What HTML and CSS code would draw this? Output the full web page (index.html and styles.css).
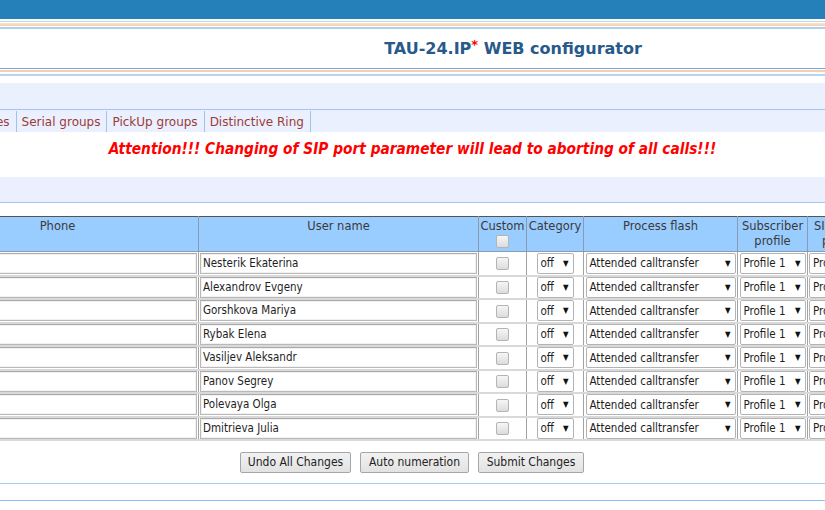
FILE: index.html
```html
<!DOCTYPE html>
<html>
<head>
<meta charset="utf-8">
<title>TAU-24.IP WEB configurator</title>
<link rel="stylesheet" href="styles.css">
</head>
<body>
<div class="topbar"></div>
<div class="stripes-top">
  <div class="ln lb1"></div>
  <div class="ln peach"></div>
  <div class="ln lb2"></div>
</div>
<div class="titlerow">
  <div class="title">TAU-24.IP<sup class="ast">*</sup> WEB configurator</div>
</div>
<div class="stripes-bot">
  <div class="ln dk"></div>
  <div class="ln peach2"></div>
  <div class="ln lb3"></div>
</div>
<div class="band band1"></div>
<div class="tabs">
  <span class="tab first">Profiles</span><span class="tab">Serial groups</span><span class="tab">PickUp groups</span><span class="tab">Distinctive Ring</span>
</div>
<div class="warn">Attention!!! Changing of SIP port parameter will lead to aborting of all calls!!!</div>
<div class="band band3"></div>
<div class="tablewrap">
<table class="grid">
  <colgroup>
    <col class="c-phone"><col class="c-user"><col class="c-custom"><col class="c-cat"><col class="c-flash"><col class="c-prof"><col class="c-sip">
  </colgroup>
  <thead>
    <tr>
      <th>Phone</th>
      <th>User name</th>
      <th class="th-custom">Custom<br><span class="cb hcb"></span></th>
      <th>Category</th>
      <th>Process flash</th>
      <th>Subscriber<br>profile</th>
      <th class="th-sip"><span>SIP</span><br><span class="l2">profile</span></th>
    </tr>
  </thead>
  <tbody>
    <tr><td class="tin"><div class="inp"></div></td><td class="tin"><div class="inp">Nesterik Ekaterina</div></td><td class="tc"><span class="cb"></span></td><td class="tc"><div class="sel s-cat"><span>off</span><span class="arr">▼</span></div></td><td class="tc"><div class="sel s-flash"><span>Attended calltransfer</span><span class="arr">▼</span></div></td><td class="tc"><div class="sel s-prof"><span>Profile 1</span><span class="arr">▼</span></div></td><td class="tl"><div class="sel s-sip"><span>Profile 1</span><span class="arr">▼</span></div></td></tr>
    <tr><td class="tin"><div class="inp"></div></td><td class="tin"><div class="inp">Alexandrov Evgeny</div></td><td class="tc"><span class="cb"></span></td><td class="tc"><div class="sel s-cat"><span>off</span><span class="arr">▼</span></div></td><td class="tc"><div class="sel s-flash"><span>Attended calltransfer</span><span class="arr">▼</span></div></td><td class="tc"><div class="sel s-prof"><span>Profile 1</span><span class="arr">▼</span></div></td><td class="tl"><div class="sel s-sip"><span>Profile 1</span><span class="arr">▼</span></div></td></tr>
    <tr><td class="tin"><div class="inp"></div></td><td class="tin"><div class="inp">Gorshkova Mariya</div></td><td class="tc"><span class="cb"></span></td><td class="tc"><div class="sel s-cat"><span>off</span><span class="arr">▼</span></div></td><td class="tc"><div class="sel s-flash"><span>Attended calltransfer</span><span class="arr">▼</span></div></td><td class="tc"><div class="sel s-prof"><span>Profile 1</span><span class="arr">▼</span></div></td><td class="tl"><div class="sel s-sip"><span>Profile 1</span><span class="arr">▼</span></div></td></tr>
    <tr><td class="tin"><div class="inp"></div></td><td class="tin"><div class="inp">Rybak Elena</div></td><td class="tc"><span class="cb"></span></td><td class="tc"><div class="sel s-cat"><span>off</span><span class="arr">▼</span></div></td><td class="tc"><div class="sel s-flash"><span>Attended calltransfer</span><span class="arr">▼</span></div></td><td class="tc"><div class="sel s-prof"><span>Profile 1</span><span class="arr">▼</span></div></td><td class="tl"><div class="sel s-sip"><span>Profile 1</span><span class="arr">▼</span></div></td></tr>
    <tr><td class="tin"><div class="inp"></div></td><td class="tin"><div class="inp">Vasiljev Aleksandr</div></td><td class="tc"><span class="cb"></span></td><td class="tc"><div class="sel s-cat"><span>off</span><span class="arr">▼</span></div></td><td class="tc"><div class="sel s-flash"><span>Attended calltransfer</span><span class="arr">▼</span></div></td><td class="tc"><div class="sel s-prof"><span>Profile 1</span><span class="arr">▼</span></div></td><td class="tl"><div class="sel s-sip"><span>Profile 1</span><span class="arr">▼</span></div></td></tr>
    <tr><td class="tin"><div class="inp"></div></td><td class="tin"><div class="inp">Panov Segrey</div></td><td class="tc"><span class="cb"></span></td><td class="tc"><div class="sel s-cat"><span>off</span><span class="arr">▼</span></div></td><td class="tc"><div class="sel s-flash"><span>Attended calltransfer</span><span class="arr">▼</span></div></td><td class="tc"><div class="sel s-prof"><span>Profile 1</span><span class="arr">▼</span></div></td><td class="tl"><div class="sel s-sip"><span>Profile 1</span><span class="arr">▼</span></div></td></tr>
    <tr><td class="tin"><div class="inp"></div></td><td class="tin"><div class="inp">Polevaya Olga</div></td><td class="tc"><span class="cb"></span></td><td class="tc"><div class="sel s-cat"><span>off</span><span class="arr">▼</span></div></td><td class="tc"><div class="sel s-flash"><span>Attended calltransfer</span><span class="arr">▼</span></div></td><td class="tc"><div class="sel s-prof"><span>Profile 1</span><span class="arr">▼</span></div></td><td class="tl"><div class="sel s-sip"><span>Profile 1</span><span class="arr">▼</span></div></td></tr>
    <tr><td class="tin"><div class="inp"></div></td><td class="tin"><div class="inp">Dmitrieva Julia</div></td><td class="tc"><span class="cb"></span></td><td class="tc"><div class="sel s-cat"><span>off</span><span class="arr">▼</span></div></td><td class="tc"><div class="sel s-flash"><span>Attended calltransfer</span><span class="arr">▼</span></div></td><td class="tc"><div class="sel s-prof"><span>Profile 1</span><span class="arr">▼</span></div></td><td class="tl"><div class="sel s-sip"><span>Profile 1</span><span class="arr">▼</span></div></td></tr>
  </tbody>
</table>
</div>
<div class="buttons">
  <button class="btn b1">Undo All Changes</button>
  <button class="btn b2">Auto numeration</button>
  <button class="btn b3">Submit Changes</button>
</div>
<div class="footer"></div>
</body>
</html>
```
FILE: styles.css
```css
html, body {
  margin: 0;
  padding: 0;
  background: #fff;
  overflow: hidden;
}
body {
  width: 825px;
  font-family: "DejaVu Sans", Verdana, sans-serif;
  font-size: 12px;
  color: #333;
}
.topbar {
  height: 19px;
  background: #2580ba;
}
.stripes-top {
  padding-top: 2px;
}
.ln { height: 1px; }
.lb1 { background: #bcd9ef; margin-bottom: 1px; }
.peach { height: 3px; background: linear-gradient(#fce6d4, #f7cba6); margin-bottom: 1px; }
.lb2 { height: 2px; background: #aed0ec; }
.titlerow {
  height: 39px;
  display: flex;
  align-items: center;
  justify-content: center;
  padding-left: 201px;
}
.title {
  font-family: "DejaVu Sans", sans-serif;
  font-weight: bold;
  font-size: 16px;
  color: #275a8a;
}
.ast {
  color: #f00;
  font-size: 13px;
  vertical-align: 5px;
  line-height: 0;
}
.dk { background: #71a8d6; margin-bottom: 1px; }
.peach2 { height: 2px; background: #f8cfae; margin-bottom: 2px; }
.lb3 { height: 2px; background: #b7d5ee; }
.band {
  background: #eaf0fd;
  border-bottom: 1px solid #a2c5f3;
}
.band1 {
  margin-top: 7px;
  height: 26px;
}
.tabs {
  background: #eaf0fd;
  height: 22px;
  display: flex;
  align-items: stretch;
  margin-left: -39px;
  white-space: nowrap;
}
.tab {
  display: flex;
  align-items: center;
  padding: 1px 6px 0 5px;
  border-right: 1px solid #9fc2f0;
  color: #9b3b3b;
  font-size: 12px;
  margin-top: 1px;
}
.warn {
  height: 45px;
  box-sizing: border-box;
  padding-top: 8px;
  text-align: center;
  color: #ff0000;
  font-family: "DejaVu Sans Condensed", "DejaVu Sans", sans-serif;
  font-stretch: condensed;
  font-weight: bold;
  font-style: italic;
  font-size: 15.3px;
}
.band3 {
  height: 25px;
}
.tablewrap {
  margin-top: 13px;
  margin-left: -84px;
  width: 1000px;
}
.grid {
  border-collapse: collapse;
  table-layout: fixed;
  width: 986px;
  border-top: 1px solid #555;
  border-bottom: 1px solid #6f6f6f;
}
.c-phone { width: 282px; }
.c-user { width: 280px; }
.c-custom { width: 48px; }
.c-cat { width: 57px; }
.c-flash { width: 154px; }
.c-prof { width: 70px; }
.c-sip { width: 95px; }
.grid th {
  background: #99ccff;
  font-weight: normal;
  font-size: 11.5px;
  line-height: 15px;
  color: #3a3a3a;
  vertical-align: top;
  padding: 2px 0 2px;
  height: 29px;
  border-left: 1px solid #8a9bb0;
  border-right: 1px solid #8a9bb0;
  border-bottom: 1px solid #8c9cad;
  text-align: center;
  white-space: nowrap;
  overflow: hidden;
}
.th-custom { font-size: 11px; }
.th-sip { text-align: left !important; padding-left: 6px !important; }
.th-sip .l2 { padding-left: 8px; }
.grid tbody tr { height: 24px; }
.grid tbody tr:nth-child(even) { height: 23px; }
.grid td {
  padding: 0 1px;
  border-left: 1px solid #a3a3a3;
  border-right: 1px solid #a3a3a3;
  border-bottom: 2px solid #d9d9d9;
  vertical-align: middle;
  font-family: "DejaVu Sans Condensed", "DejaVu Sans", sans-serif;
  font-stretch: condensed;
  font-size: 11.5px;
  color: #1e1e1e;
  white-space: nowrap;
  overflow: hidden;
}
.tc { text-align: center; }
.tl { text-align: left; }
.inp {
  height: 19px;
  border: 1px solid #b9b9b9;
  border-top-color: #a9a9a9;
  box-shadow: inset 0 0 0 1px #f2f2f2;
  background: #fff;
  line-height: 19px;
  padding-left: 2px;
  text-align: left;
}
.cb {
  display: inline-block;
  width: 11px;
  height: 11px;
  border: 1px solid #b4b4b4;
  border-radius: 2px;
  background: linear-gradient(#f6f6f6, #dcdcdc);
  vertical-align: middle;
}
.hcb { margin-top: 1px; vertical-align: top; }
.sel {
  display: inline-flex;
  align-items: center;
  justify-content: space-between;
  box-sizing: border-box;
  height: 21px;
  border: 1px solid #b3b3b3;
  border-radius: 2px;
  background: #fff;
  padding: 0 4px 0 3px;
  vertical-align: middle;
  text-align: left;
}
.arr {
  font-size: 8px;
  color: #111;
  font-family: "DejaVu Sans", sans-serif;
  margin-left: 4px;
}
.s-cat { width: 37px; }
.s-flash { width: 150px; }
.s-prof { width: 66px; }
.s-sip { width: 66px; }
.buttons {
  display: flex;
  justify-content: center;
  gap: 9px;
  margin-top: 11px;
  padding-right: 1px;
}
.btn {
  height: 21px;
  box-sizing: border-box;
  padding: 0 6px;
  border: 1px solid #a6a6a6;
  border-radius: 2px;
  background: linear-gradient(#f2f2f2, #e2e2e2);
  font-family: "DejaVu Sans Condensed", "DejaVu Sans", sans-serif;
  font-stretch: condensed;
  font-size: 12px;
  color: #222;
}
.b1 { width: 111px; }
.b2 { width: 109px; }
.b3 { width: 106px; }
.footer {
  margin-top: 10px;
  height: 16px;
  border-top: 1px solid #a8cbf3;
  border-bottom: 1px solid #8fbcf0;
}
```
